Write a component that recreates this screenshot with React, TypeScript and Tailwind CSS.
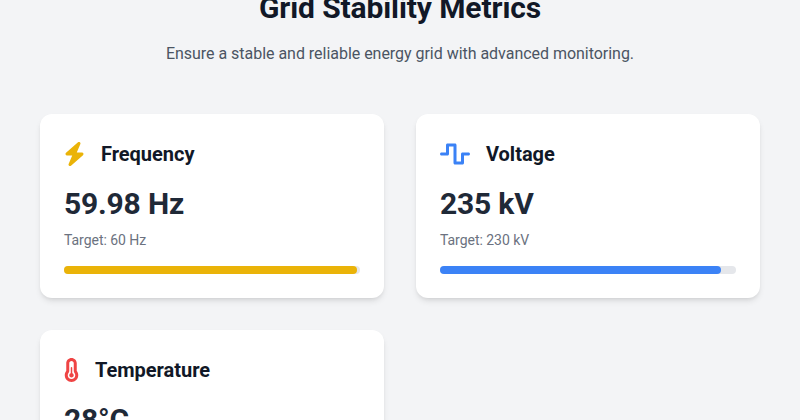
import { FaBolt, FaTemperatureHalf, FaWaveSquare } from "react-icons/fa6";
import type { ReactNode } from "react";

type Metric = {
  name: string;
  icon: ReactNode;
  value: string;
  target: string;
  bar: string;
  percent: number;
};

const metrics: Metric[] = [
  { name: "Frequency", icon: <FaBolt className="mr-4 h-6 w-[21px] shrink-0 text-[#eab308]" />, value: "59.98 Hz", target: "Target: 60 Hz", bar: "bg-[#eab308]", percent: 99 },
  { name: "Voltage", icon: <FaWaveSquare className="mr-4 h-6 w-[30px] shrink-0 text-[#3b82f6]" />, value: "235 kV", target: "Target: 230 kV", bar: "bg-[#3b82f6]", percent: 95 },
  { name: "Temperature", icon: <FaTemperatureHalf className="mr-4 h-6 w-[15px] shrink-0 text-[#ef4444]" />, value: "28°C", target: "Target: 25°C", bar: "bg-[#ef4444]", percent: 80 },
];

function MetricCard({ metric }: { metric: Metric }) {
  return (
    <div className="rounded-xl bg-white p-6 shadow-md">
      <div className="mb-4 flex h-8 items-center">
        {metric.icon}
        <h3 className="text-xl font-bold tracking-[-0.02px] text-[#111827]">{metric.name}</h3>
      </div>
      <p className="text-3xl font-bold tracking-[-0.18px] text-[#1f2937]">{metric.value}</p>
      <p className="mt-2 text-sm tracking-[-0.04px] text-[#6b7280]">{metric.target}</p>
      <div className="mt-4 h-2 w-full rounded-full bg-[#e5e7eb]">
        <div className={`h-2 rounded-full ${metric.bar}`} style={{ width: `${metric.percent}%` }} />
      </div>
    </div>
  );
}

export default function App() {
  return (
    <div className="h-[420px] overflow-hidden bg-[#f3f4f6] font-['Roboto',sans-serif]">
      <section className="-mt-2.5 px-10">
        <div className="mb-12 text-center">
          <h2 className="text-3xl font-bold tracking-[-0.1px] text-[#111827]">Grid Stability Metrics</h2>
          <p className="mt-4 text-base tracking-[-0.03px] text-[#4b5563]">Ensure a stable and reliable energy grid with advanced monitoring.</p>
        </div>
        <div className="grid grid-cols-2 gap-8">
          {metrics.map((metric) => (
            <MetricCard key={metric.name} metric={metric} />
          ))}
        </div>
      </section>
    </div>
  );
}
